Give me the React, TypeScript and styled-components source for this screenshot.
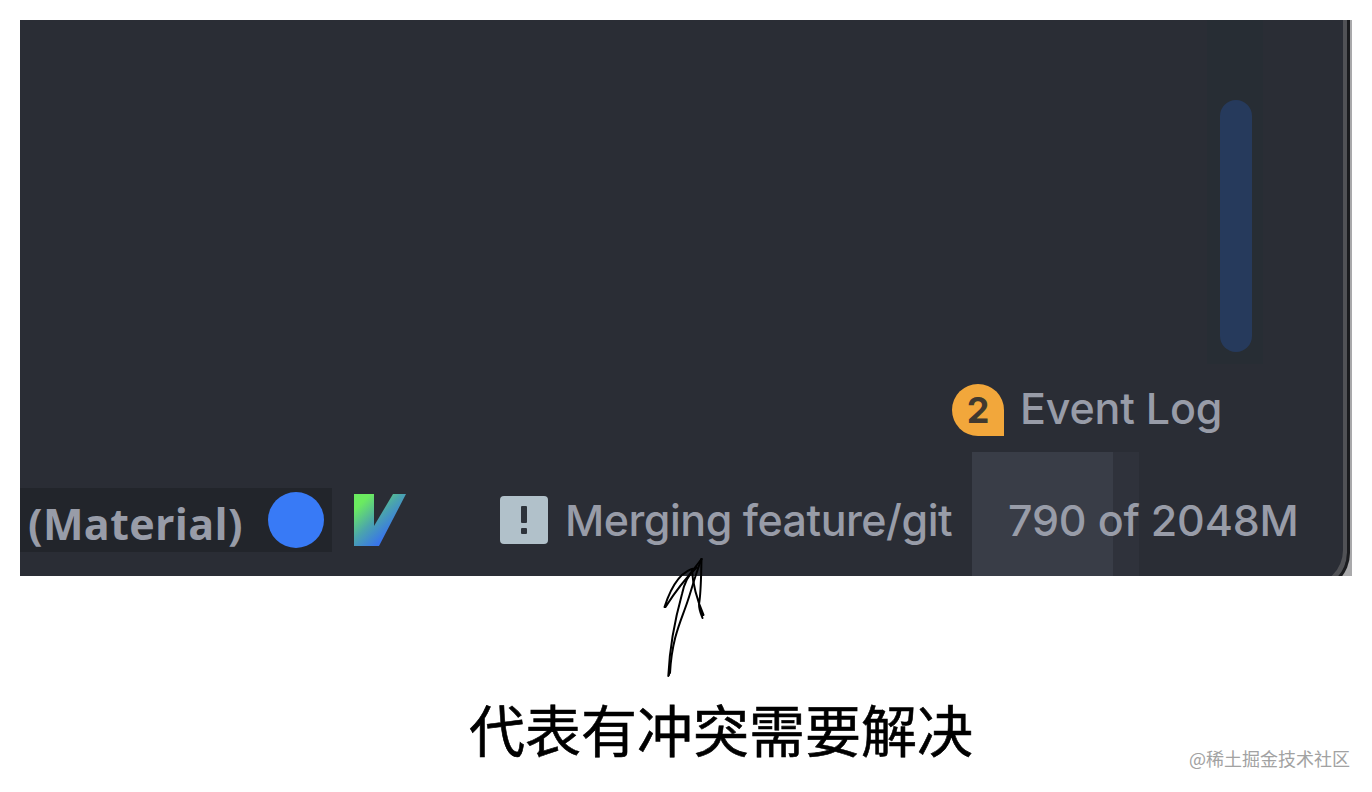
import React from 'react'
import styled, { createGlobalStyle } from 'styled-components'

const GlobalStyle = createGlobalStyle`
  * {
    box-sizing: border-box;
  }

  body {
    margin: 0;
    background: #FFF;
  }
`

const Page = styled.main`
  position: relative;
  display: flex;
  flex-direction: column;
  height: 792px;
  padding: 20px 20px 0;
  overflow: hidden;
  font-family: Inter, "Noto Sans CJK SC", sans-serif;
`

const Desktop = styled.div`
  flex: none;
  height: 556px;
  overflow: hidden;
  background: #A9A9AB;
`

// the window runs a little past the desktop, so its corner is cut off
const Window = styled.section`
  display: flex;
  flex-direction: column;
  width: 1330px;
  height: 571px;
  background: #2A2D35;
  border-right: 3px solid #1B1C1F;
  border-bottom: 3px solid #1B1C1F;
  border-bottom-right-radius: 38px;
  box-shadow: inset -4px -3px 0 #515256;
`

const Editor = styled.div`
  display: flex;
  justify-content: flex-end;
  height: 344px;
  padding-right: 84px;
`

const Gutter = styled.div`
  display: flex;
  justify-content: flex-end;
  width: 56px;
  padding: 80px 11px 12px 0;
  background: #272D34;
`

const Thumb = styled.div`
  width: 32px;
  border-radius: 16px;
  background: #263A5C;
`

const Label = styled.span<{ $spacing?: number }>`
  color: #989CA8;
  font-size: 43px;
  font-weight: 500;
  line-height: 52px;
  letter-spacing: ${({ $spacing = 0 }) => $spacing}px;
  white-space: nowrap;
`

const ToolRow = styled.div`
  display: flex;
  align-items: center;
  gap: 16px;
  height: 88px;
  padding: 4px 0 0 932px;

  ${Label} {
    padding-bottom: 4px;
  }
`

const Badge = styled.span`
  display: flex;
  align-items: center;
  justify-content: center;
  width: 52px;
  height: 52px;
  border-radius: 26px 26px 0 26px;
  background: #F2A73B;
  color: #40392F;
  font-size: 36px;
  font-weight: 700;
  line-height: 52px;
`

const StatusBar = styled.footer`
  display: flex;
  height: 124px;
`

const StatusItem = styled.div<{ $width: number }>`
  display: flex;
  align-items: center;
  width: ${({ $width }) => $width}px;
  height: 136px;
`

const Theme = styled.div`
  display: flex;
  align-items: center;
  justify-content: space-between;
  width: 312px;
  height: 64px;
  padding: 0 8px;
  background: #22252B;
`

const ThemeName = styled.span`
  padding-top: 8px;
  color: #989CA8;
  font-family: "Open Sans", "Noto Sans", sans-serif;
  font-size: 43px;
  font-weight: 700;
  letter-spacing: 0.35px;
  line-height: 58px;
  white-space: nowrap;
`

const Dot = styled.span`
  width: 56px;
  height: 56px;
  border-radius: 50%;
  background: #387AF6;
`

const Memory = styled.div`
  display: flex;
  align-items: center;
  width: 340px;
  padding: 12px 0 0 36px;
  background: linear-gradient(90deg, #393D47 141px, #2F323B 141px, #2F323B 167px, transparent 167px);
`

const Caption = styled.p`
  margin: 110px 0 0 449px;
  color: #000;
  font-family: "Noto Sans CJK SC", sans-serif;
  font-size: 56px;
  line-height: 84px;
  -webkit-text-stroke: 0.6px #000;
`

const Watermark = styled.small`
  margin: -25px 2px 0 auto;
  color: #A2A2A2;
  font-family: "Noto Sans CJK SC", sans-serif;
  font-size: 18px;
  line-height: 26px;
`

const Arrow = styled.svg`
  position: absolute;
  left: 655px;
  top: 550px;
  fill: none;
  stroke: #000;
  stroke-width: 2;
  stroke-linecap: round;
`

const VLogo: React.FC = () => (
  <svg width="52" height="52" viewBox="0 0 52 52">
    <defs>
      <linearGradient id="v" x1="4" y1="4" x2="38" y2="40" gradientUnits="userSpaceOnUse">
        <stop offset="0.12" stopColor="#6BEB60" />
        <stop offset="0.55" stopColor="#4BA5AC" />
        <stop offset="0.95" stopColor="#3874EB" />
      </linearGradient>
    </defs>
    <path d="M0 0H20V32L39 0H52L25 52H0Z" fill="url(#v)" />
  </svg>
)

const AlertIcon: React.FC = () => (
  <svg width="48" height="48" viewBox="0 0 48 48">
    <rect width="48" height="48" rx="4" fill="#B1C1CA" />
    <rect x="21" y="10" width="6" height="17" rx="1" fill="#2D333B" />
    <rect x="21" y="32" width="6" height="6" rx="1" fill="#2D333B" />
  </svg>
)

const App: React.FC = () => (
  <Page>
    <GlobalStyle />

    <Desktop>
      <Window>
        <Editor>
          <Gutter>
            <Thumb />
          </Gutter>
        </Editor>

        <ToolRow>
          <Badge>2</Badge>
          <Label $spacing={-0.2}>Event Log</Label>
        </ToolRow>

        <StatusBar>
          <StatusItem $width={334}>
            <Theme>
              <ThemeName>(Material)</ThemeName>
              <Dot />
            </Theme>
          </StatusItem>
          <StatusItem $width={146}>
            <VLogo />
          </StatusItem>
          <StatusItem $width={65}>
            <AlertIcon />
          </StatusItem>
          <StatusItem $width={407}>
            <Label $spacing={-0.5}>Merging feature/git</Label>
          </StatusItem>
          <Memory>
            <Label $spacing={-0.2}>790 of 2048M</Label>
          </Memory>
        </StatusBar>
      </Window>
    </Desktop>

    <Caption>代表有冲突需要解决</Caption>
    <Watermark>@稀土掘金技术社区</Watermark>

    <Arrow width="60" height="136" viewBox="0 0 60 136">
      <path d="M13.3 126C15 90 22 62 27 44C29 34 33 25 41 17" />
      <path d="M46.5 9C40 26 37 38 33 50C27 69 17 86 15 123M14 125L15 117" />
      <path d="M9.5 57C16 37 26 20 41 18C32 27 20 42 10.5 57M32 28L46.5 9" />
      <path d="M46.5 9C46 28 46 44 44 54C44 60 46 64 47.500 68M37 20C38 38 43 52 48.500 65" />
    </Arrow>
  </Page>
)

export default App
